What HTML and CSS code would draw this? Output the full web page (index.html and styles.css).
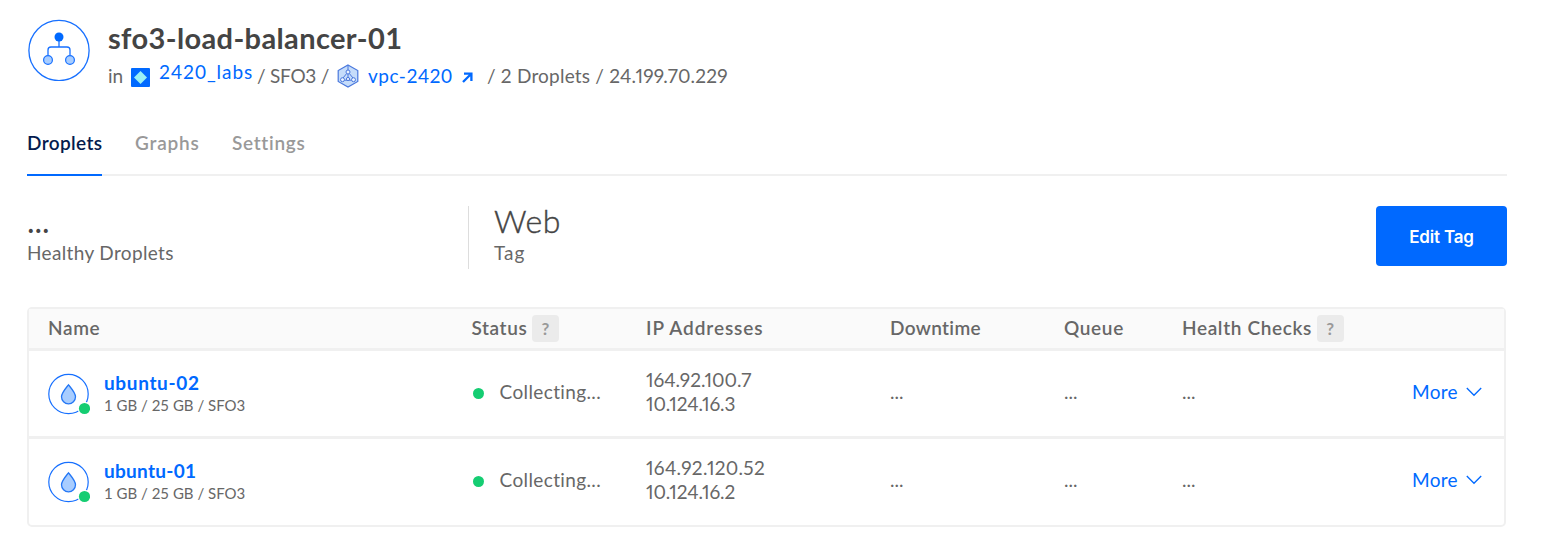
FILE: index.html
```html
<!DOCTYPE html>
<html lang="en">
<head>
<meta charset="utf-8">
<title>sfo3-load-balancer-01</title>
<link rel="stylesheet" href="styles.css">
</head>
<body>
<main class="page">
  <header class="resource">
    <svg class="resource-icon" viewBox="0 0 62 62" width="62" height="62" fill="none" stroke="#1770ff">
      <circle cx="31" cy="31.500" r="30.100" stroke-width="1.300"/>
      <path d="M31 18v10M20 36v-5a3 3 0 0 1 3-3h16a3 3 0 0 1 3 3v5" stroke-width="1.300"/>
      <circle cx="31" cy="18" r="4.500" fill="#0069ff" stroke="none"/>
      <circle cx="20" cy="41" r="4.400" fill="#a8cdff" stroke-width="1.200"/>
      <circle cx="42" cy="41" r="4.400" fill="#a8cdff" stroke-width="1.200"/>
    </svg>
    <div class="resource-text">
      <h1 class="title">sfo3-load-balancer-01</h1>
      <div class="crumbs">
        <span class="c-in">in</span>
        <svg class="project-icon" viewBox="0 0 19 19" width="19" height="19"><rect width="19" height="19" rx="1" fill="#0069ff"/><path d="M9.500 3l6.500 6.500-6.500 6.500L3 9.500z" fill="#99f0f5"/></svg>
        <a class="c-project">2420_labs</a>
        <span class="c-region">/ SFO3 /</span>
        <svg class="vpc-icon" viewBox="0 0 22 24" width="22" height="24" fill="none" stroke="#4a78dd">
          <path d="M11 1l9.800 5.500v11L11 23l-9.800-5.500v-11z" fill="#c5dcfa" stroke-width="1.200"/>
          <path d="M11 1v5M11 10v4M9.700 9.500L6 14M12.300 9.500L16 14M7.500 16.200h7" stroke-width="1"/>
          <circle cx="11" cy="8" r="2" fill="#eaf3ff"/><circle cx="5.500" cy="15.700" r="2" fill="#eaf3ff"/><circle cx="16.500" cy="15.700" r="2" fill="#eaf3ff"/><circle cx="11" cy="15" r="1.600" fill="#eaf3ff"/>
        </svg>
        <a class="c-vpc">vpc-2420</a>
        <svg class="out-icon" viewBox="0 0 11 11" width="11" height="11" fill="none" stroke="#0069ff" stroke-width="2.300"><path d="M1 10l8-8M2 1.700h7.400V9"/></svg>
        <span class="c-rest">/ 2 Droplets / 24.199.70.229</span>
      </div>
    </div>
  </header>

  <nav class="tabs">
    <a class="tab tab-active">Droplets</a>
    <a class="tab tab-graphs">Graphs</a>
    <a class="tab">Settings</a>
  </nav>

  <section class="summary">
    <div class="stat stat-health">
      <div class="stat-value">...</div>
      <div class="stat-label">Healthy Droplets</div>
    </div>
    <div class="stat stat-tag">
      <div class="stat-value"><span class="l-web">Web</span></div>
      <div class="stat-label"><span class="l-tag">Tag</span></div>
    </div>
    <button class="edit">Edit Tag</button>
  </section>

  <section class="table">
    <div class="row head">
      <div>Name</div>
      <div class="with-help"><span class="h-status">Status</span><span class="help">?</span></div>
      <div><span class="h-ip">IP Addresses</span></div>
      <div><span class="h-down">Downtime</span></div>
      <div>Queue</div>
      <div class="with-help"><span class="h-health">Health Checks</span><span class="help">?</span></div>
      <div></div>
    </div>
    <div class="row">
      <div class="droplet">
        <svg class="droplet-icon" viewBox="0 0 42 42" width="42" height="42"><circle cx="20.500" cy="21" r="19.700" fill="none" stroke="#1770ff" stroke-width="1.200"/><path d="M20.500 11.800c-2.600 3.200-7 8.300-7 12a7 7 0 0 0 14 0c0-3.700-4.400-8.800-7-12z" fill="#a8cdff" stroke="#2477f5" stroke-width="1.300"/><circle cx="36.500" cy="35.500" r="6.800" fill="#fff"/><circle cx="36.500" cy="35.500" r="5.600" fill="#15cd72"/></svg>
        <div class="droplet-text"><a class="d-name">ubuntu-02</a><span class="d-size">1 GB / 25 GB / SFO3</span></div>
      </div>
      <div class="status"><i class="dot"></i><span class="s-text">Collecting...</span></div>
      <div class="ips"><span>164.92.100.7</span><span class="ip-private">10.124.16.3</span></div>
      <div class="dots">...</div><div class="dots">...</div><div class="dots">...</div>
      <div class="more"><a>More</a><svg viewBox="0 0 16 10" width="16" height="10" fill="none" stroke="#0069ff" stroke-width="1.300"><path d="M.8 1L8 8.300 15.200 1"/></svg></div>
    </div>
    <div class="row">
      <div class="droplet">
        <svg class="droplet-icon" viewBox="0 0 42 42" width="42" height="42"><circle cx="20.500" cy="21" r="19.700" fill="none" stroke="#1770ff" stroke-width="1.200"/><path d="M20.500 11.800c-2.600 3.200-7 8.300-7 12a7 7 0 0 0 14 0c0-3.700-4.400-8.800-7-12z" fill="#a8cdff" stroke="#2477f5" stroke-width="1.300"/><circle cx="36.500" cy="35.500" r="6.800" fill="#fff"/><circle cx="36.500" cy="35.500" r="5.600" fill="#15cd72"/></svg>
        <div class="droplet-text"><a class="d-name d-name-narrow">ubuntu-01</a><span class="d-size">1 GB / 25 GB / SFO3</span></div>
      </div>
      <div class="status"><i class="dot"></i><span class="s-text">Collecting...</span></div>
      <div class="ips"><span class="ip-wide">164.92.120.52</span><span class="ip-private">10.124.16.2</span></div>
      <div class="dots">...</div><div class="dots">...</div><div class="dots">...</div>
      <div class="more"><a>More</a><svg viewBox="0 0 16 10" width="16" height="10" fill="none" stroke="#0069ff" stroke-width="1.300"><path d="M.8 1L8 8.300 15.200 1"/></svg></div>
    </div>
  </section>
</main>
</body>
</html>
```
FILE: styles.css
```css
* { box-sizing: border-box; }
body {
  margin: 0;
  background: #fff;
  color: #676767;
  font: 400 19px/24px Lato, "Open Sans", sans-serif;
  font-variant-ligatures: none;
}
span, a { white-space: nowrap; }
.page { width: 1480px; margin-left: 27px; }

.resource { display: flex; height: 119px; padding-top: 19px; }
.resource-icon { margin-left: 1px; }
.resource-text { margin-left: 18px; }
.title { margin: 0; color: #444; font-size: 29px; line-height: 38px; font-weight: 700; letter-spacing: .37px; }
.crumbs { display: flex; align-items: center; height: 38px; }
.crumbs a { color: #0069ff; }
.project-icon { margin: 3px 0 0 8px; }
.c-in { width: 15px; }
.c-project { margin: -9px 0 0 9px; width: 94px; letter-spacing: .95px; }
.c-region { margin-left: 4px; width: 72px; letter-spacing: -.25px; }
.vpc-icon { margin-left: 8px; }
.c-vpc { margin-left: 9px; width: 85px; letter-spacing: .5px; }
.out-icon { margin: 3px 0 0 9px; }
.c-rest { margin-left: 14px; font-variant-numeric: proportional-nums; letter-spacing: .21px; }

.tabs { display: flex; gap: 33px; height: 57px; border-bottom: 2px solid #f0f0f0; font-weight: 600; }
.tab { height: 57px; padding-top: 12px; color: #999; letter-spacing: .7px; }
.tab-active { width: 75px; color: #031b4e; border-bottom: 2px solid #0069ff; letter-spacing: .38px; }
.tab-graphs { width: 64px; letter-spacing: .8px; }

.summary { display: flex; height: 131px; padding-top: 30px; }
.stat { height: 63px; }
.stat-health { width: 441px; }
.stat-tag { border-left: 1px solid #ddd; padding-left: 25px; }
.stat-value { height: 35px; color: #444; font-size: 32px; line-height: 30px; }
.l-web { font-weight: 300; letter-spacing: .6px; -webkit-text-stroke: .4px #444; }
.stat-label { line-height: 24px; letter-spacing: .35px; }
.l-tag { letter-spacing: 1px; }
.edit { margin-left: auto; width: 131px; height: 60px; padding: 2px 0 0; border: 0; border-radius: 4px; background: #0069ff; color: #fff; font: 600 17px/24px Inter, sans-serif; letter-spacing: -.2px; }

.table { width: 1479px; height: 220px; border: 2px solid #f0f0f0; border-radius: 5px; }
.row { display: grid; grid-template-columns: 423.500px 174.500px 244px 174px 118px 230px auto; align-items: center; height: 88px; padding: 0 0 0 19px; border-bottom: 3px solid #f0f0f0; }
.row:last-child { border-bottom: 0; height: 85px; }
.head { height: 42px; padding-bottom: 1px; background: #fafafa; font-weight: 600; letter-spacing: .65px; }
.h-status { letter-spacing: .6px; }
.h-ip { letter-spacing: .9px; }
.h-down { letter-spacing: .35px; }
.with-help { display: flex; align-items: center; }
.help { width: 27px; height: 27px; margin-left: 5px; border-radius: 4px; background: #ebebeb; color: #999; font-size: 17px; font-weight: 700; line-height: 27px; text-align: center; }
.droplet { display: flex; align-items: center; }
.droplet-text { display: flex; flex-direction: column; margin: -2px 0 0 14px; }
.d-name { color: #0069ff; font-weight: 700; line-height: 24px; letter-spacing: .65px; }
.d-name-narrow { letter-spacing: .28px; }
.d-size { font-size: 15px; line-height: 20px; }
.status, .ips, .dots, .more { padding-bottom: 3px; }
.status { display: flex; align-items: center; }
.s-text { letter-spacing: .38px; }
.dot { width: 11px; height: 11px; margin: 3px 16px 0 1px; border-radius: 50%; background: #15cd72; }
.ips { display: flex; flex-direction: column; font-variant-numeric: proportional-nums; }
.ip-wide { letter-spacing: .33px; }
.ip-private { letter-spacing: -.08px; }
.more { display: flex; align-items: center; color: #0069ff; letter-spacing: .3px; }
.more svg { margin-left: 8px; }
```
